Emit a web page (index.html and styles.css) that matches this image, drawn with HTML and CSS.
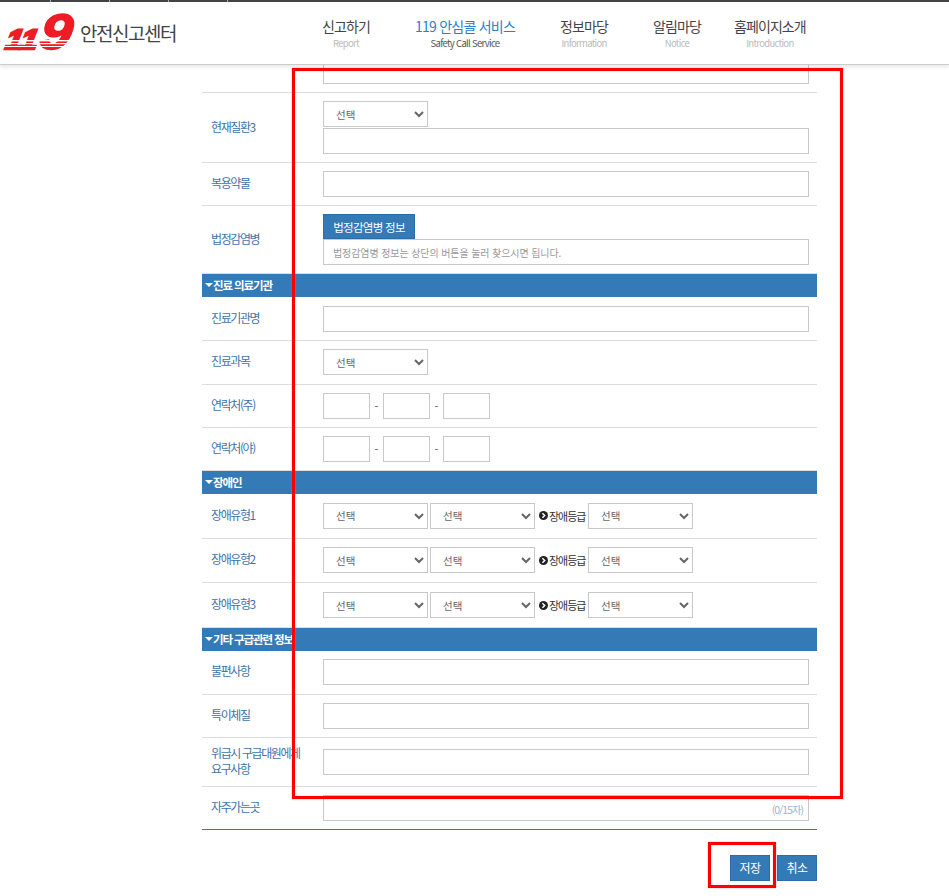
FILE: index.html
```html
<!DOCTYPE html>
<html lang="ko">

<head>
  <meta charset="UTF-8">
  <meta name="viewport" content="width=device-width, initial-scale=1.0">
  <title>119 안전신고센터</title>
  <link rel="stylesheet" href="styles.css">
</head>

<body>
  <header class="navbar">
    <div class="logo">
      <svg class="logo-mark" width="72" height="38" viewBox="0 0 72 38">
        <g class="logo-digits">
          <text class="digit-small" transform="translate(1.5 35) skewX(-10) scale(1.1 1)" font-size="28">11</text>
          <text transform="translate(35 35) skewX(-8) scale(1.16 1)" font-size="50">9</text>
        </g>
        <g class="logo-stripes">
          <rect x="0" y="26" width="72" height="1.4"></rect>
          <rect x="0" y="29" width="72" height="1.2"></rect>
          <rect x="0" y="32" width="72" height="1"></rect>
        </g>
      </svg>
      <span class="logo-text">안전신고센터</span>
    </div>
    <nav class="nav-links">
      <a class="nav-item" href="#"><b>신고하기</b><small>Report</small></a>
      <a class="nav-item active" href="#"><b>119 안심콜 서비스</b><small>Safety Call Service</small></a>
      <a class="nav-item" href="#"><b>정보마당</b><small>Information</small></a>
      <a class="nav-item" href="#"><b>알림마당</b><small>Notice</small></a>
      <a class="nav-item" href="#"><b>홈페이지소개</b><small>Introduction</small></a>
    </nav>
  </header>

  <main class="form-wrap">
    <div class="row row-cut">
      <div class="label"></div>
      <div class="field"><input class="text-input" type="text"></div>
    </div>
    <div class="row row-stack">
      <div class="label">현재질환3</div>
      <div class="field field-stack">
        <select class="pick"><option>선택</option></select>
        <input class="text-input" type="text">
      </div>
    </div>
    <div class="row">
      <div class="label">복용약물</div>
      <div class="field"><input class="text-input" type="text"></div>
    </div>
    <div class="row row-stack-btn">
      <div class="label">법정감염병</div>
      <div class="field field-stack-tight">
        <button class="info-btn" type="button">법정감염병 정보</button>
        <input class="text-input" type="text" placeholder="법정감염병 정보는 상단의 버튼을 눌러 찾으시면 됩니다.">
      </div>
    </div>

    <h3 class="section-bar">진료 의료기관</h3>
    <div class="row row-44">
      <div class="label">진료기관명</div>
      <div class="field"><input class="text-input" type="text"></div>
    </div>
    <div class="row row-44 row-pick">
      <div class="label">진료과목</div>
      <div class="field"><select class="pick"><option>선택</option></select></div>
    </div>
    <div class="row">
      <div class="label">연락처(주)</div>
      <div class="field phone">
        <input class="tel-input" type="text"><span>-</span><input class="tel-input" type="text"><span>-</span><input class="tel-input" type="text">
      </div>
    </div>
    <div class="row">
      <div class="label">연락처(야)</div>
      <div class="field phone">
        <input class="tel-input" type="text"><span>-</span><input class="tel-input" type="text"><span>-</span><input class="tel-input" type="text">
      </div>
    </div>

    <h3 class="section-bar">장애인</h3>
    <div class="row row-disabled">
      <div class="label">장애유형1</div>
      <div class="field selects">
        <select class="pick"><option>선택</option></select>
        <select class="pick"><option>선택</option></select>
        <span class="grade"><svg width="9" height="9" viewBox="0 0 9 9"><circle cx="4.5" cy="4.5" r="4.5" fill="#222"></circle><path d="M3.4 2.2 5.7 4.5 3.4 6.8" fill="none" stroke="#fff" stroke-width="1.5"></path></svg>장애등급</span>
        <select class="pick"><option>선택</option></select>
      </div>
    </div>
    <div class="row row-disabled">
      <div class="label">장애유형2</div>
      <div class="field selects">
        <select class="pick"><option>선택</option></select>
        <select class="pick"><option>선택</option></select>
        <span class="grade"><svg width="9" height="9" viewBox="0 0 9 9"><circle cx="4.5" cy="4.5" r="4.5" fill="#222"></circle><path d="M3.4 2.2 5.7 4.5 3.4 6.8" fill="none" stroke="#fff" stroke-width="1.5"></path></svg>장애등급</span>
        <select class="pick"><option>선택</option></select>
      </div>
    </div>
    <div class="row row-disabled">
      <div class="label">장애유형3</div>
      <div class="field selects">
        <select class="pick"><option>선택</option></select>
        <select class="pick"><option>선택</option></select>
        <span class="grade"><svg width="9" height="9" viewBox="0 0 9 9"><circle cx="4.5" cy="4.5" r="4.5" fill="#222"></circle><path d="M3.4 2.2 5.7 4.5 3.4 6.8" fill="none" stroke="#fff" stroke-width="1.5"></path></svg>장애등급</span>
        <select class="pick"><option>선택</option></select>
      </div>
    </div>

    <h3 class="section-bar">기타 구급관련 정보</h3>
    <div class="row row-44">
      <div class="label">불편사항</div>
      <div class="field"><input class="text-input" type="text"></div>
    </div>
    <div class="row">
      <div class="label">특이체질</div>
      <div class="field"><input class="text-input" type="text"></div>
    </div>
    <div class="row row-49">
      <div class="label">위급시 구급대원에게<br>요구사항</div>
      <div class="field"><input class="text-input" type="text"></div>
    </div>
    <div class="row row-last">
      <div class="label">자주가는곳</div>
      <div class="field counter-field">
        <input class="text-input" type="text">
        <span class="counter">(0/15자)</span>
      </div>
    </div>

    <div class="actions">
      <button class="action-btn" type="button">저장</button>
      <button class="action-btn" type="button">취소</button>
    </div>
  </main>

  <!-- red review marks on top of the capture -->
  <div class="mark mark-form"></div>
  <div class="mark mark-save"></div>
</body>

</html>
```

FILE: styles.css
```css
* {
  margin: 0;
  padding: 0;
  box-sizing: border-box;
  font-family: "Noto Sans CJK KR", "Noto Sans", sans-serif;
}

body {
  background: #fff;
  color: #333;
  position: relative;
  overflow: hidden;
  height: 896px;
}

.navbar {
  position: relative;
  z-index: 10;
  display: flex;
  height: 65px;
  background: #fff;
  border-top: 2px solid #444;
  border-bottom: 1px solid #ccc;
  box-shadow: 0 2px 4px rgba(0, 0, 0, 0.1);
}

/* tab dividers left over from the bar above the capture */
.navbar::before {
  content: '';
  position: absolute;
  top: -2px;
  left: 50px;
  width: 179px;
  height: 2px;
  background: repeating-linear-gradient(to right, #aaa 0 1px, transparent 1px 59px);
}

.logo {
  display: flex;
  align-items: center;
  width: 322px;
  padding-left: 3px;
}

.logo-mark {
  overflow: visible;
  margin-top: -1px;
}

.logo-digits text {
  font-family: "Liberation Sans", sans-serif;
  font-weight: 700;
  font-style: italic;
  fill: #ee1c25;
  stroke: #ee1c25;
  stroke-width: 1.6;
}

.logo-digits .digit-small {
  stroke-width: 2.4;
}

.logo-stripes rect {
  fill: #fff;
}

.logo-text {
  margin-left: 5px;
  margin-top: -1px;
  font-size: 19px;
  font-weight: 400;
  letter-spacing: -1.5px;
  color: #444;
}

.nav-links {
  display: flex;
  gap: 45px;
}

.nav-item {
  display: flex;
  flex-direction: column;
  align-items: center;
  padding-top: 14px;
  text-decoration: none;
  white-space: nowrap;
}

.nav-item:last-child {
  margin-left: -12px;
}

.nav-item b {
  font-size: 14px;
  font-weight: 400;
  line-height: 20px;
  letter-spacing: -0.9px;
  color: #444;
}

.nav-item small {
  font-size: 9.5px;
  line-height: 14px;
  letter-spacing: -0.7px;
  color: #bbb;
}

.nav-item.active b {
  letter-spacing: -0.75px;
  color: #2b7fc9;
}

.nav-item.active small {
  color: #555;
}

.form-wrap {
  width: 615px;
  margin-left: 202px;
}

.row {
  display: flex;
  align-items: center;
  height: 43px;
  border-bottom: 1px solid #ddd;
}

.row-cut {
  height: 28px;
  align-items: flex-end;
  padding-bottom: 8px;
}

.row-stack {
  height: 70px;
}

.row-stack-btn {
  height: 68px;
}

.row-44 {
  height: 44px;
}

.row-pick {
  padding-bottom: 1px;
}

.row-49 {
  height: 49px;
}

.row-disabled {
  height: 44.67px;
}

.row-last {
  border-bottom: 1px solid #337ab7;
}

.label {
  flex: none;
  width: 121px;
  margin-top: -2px;
  padding-left: 9px;
  font-size: 12px;
  line-height: 16px;
  letter-spacing: -1.4px;
  color: #3f72ab;
  white-space: nowrap;
}

.field {
  display: flex;
  align-items: center;
  width: 486px;
}

.field-stack,
.field-stack-tight {
  flex-direction: column;
  align-items: flex-start;
}

.field-stack {
  gap: 1px;
}

.text-input {
  display: block;
  width: 486px;
  height: 26px;
  padding: 0 9px;
  border: 1px solid #c8c8c8;
  background: #fff;
  font-size: 10px;
  letter-spacing: -0.1px;
}

.text-input::placeholder {
  color: #999;
  opacity: 1;
}

.pick {
  flex: none;
  width: 105px;
  height: 26px;
  padding-left: 8px;
  border: 1px solid #c8c8c8;
  border-radius: 0;
  background: #fff;
  color: #666;
  font-size: 10.5px;
}

.selects {
  gap: 2px;
}

.grade {
  display: flex;
  align-items: center;
  gap: 1px;
  width: 47px;
  margin-left: 2px;
  font-size: 11px;
  letter-spacing: -1px;
  color: #333;
  white-space: nowrap;
}

.phone span {
  width: 13px;
  text-align: center;
  font-size: 11px;
  color: #555;
}

.tel-input {
  width: 47px;
  height: 26px;
  border: 1px solid #c8c8c8;
}

.info-btn {
  width: 92px;
  height: 25px;
  border: 1px solid #2e6da4;
  background: #337ab7;
  color: #fff;
  font-size: 11.5px;
  letter-spacing: -0.7px;
}

.section-bar {
  display: flex;
  align-items: center;
  height: 23px;
  padding: 0 0 1px 3px;
  background: #337ab7;
  color: #fff;
  font-size: 11.5px;
  font-weight: 700;
  letter-spacing: -1.1px;
}

.section-bar::before {
  content: '';
  width: 0;
  height: 0;
  border-left: 4px solid transparent;
  border-right: 4px solid transparent;
  border-top: 4px solid #fff;
}

.counter-field {
  position: relative;
}

.counter {
  position: absolute;
  right: 6px;
  top: 7px;
  font-size: 10.5px;
  letter-spacing: -1px;
  color: #8fb8dc;
}

.actions {
  display: flex;
  justify-content: flex-end;
  gap: 7px;
  margin-top: 25px;
}

.action-btn {
  width: 40px;
  height: 26px;
  border: 1px solid #2e6da4;
  background: #337ab7;
  color: #fff;
  font-size: 12px;
  letter-spacing: -0.5px;
}

.mark {
  position: absolute;
  z-index: 20;
  border: 3px solid #f00;
  box-shadow: 0 0 1px #f66, inset 0 0 1px #f66;
}

.mark-form {
  left: 292px;
  top: 68px;
  width: 551px;
  height: 731px;
}

.mark-save {
  left: 708px;
  top: 842px;
  width: 68px;
  height: 46px;
}
```
